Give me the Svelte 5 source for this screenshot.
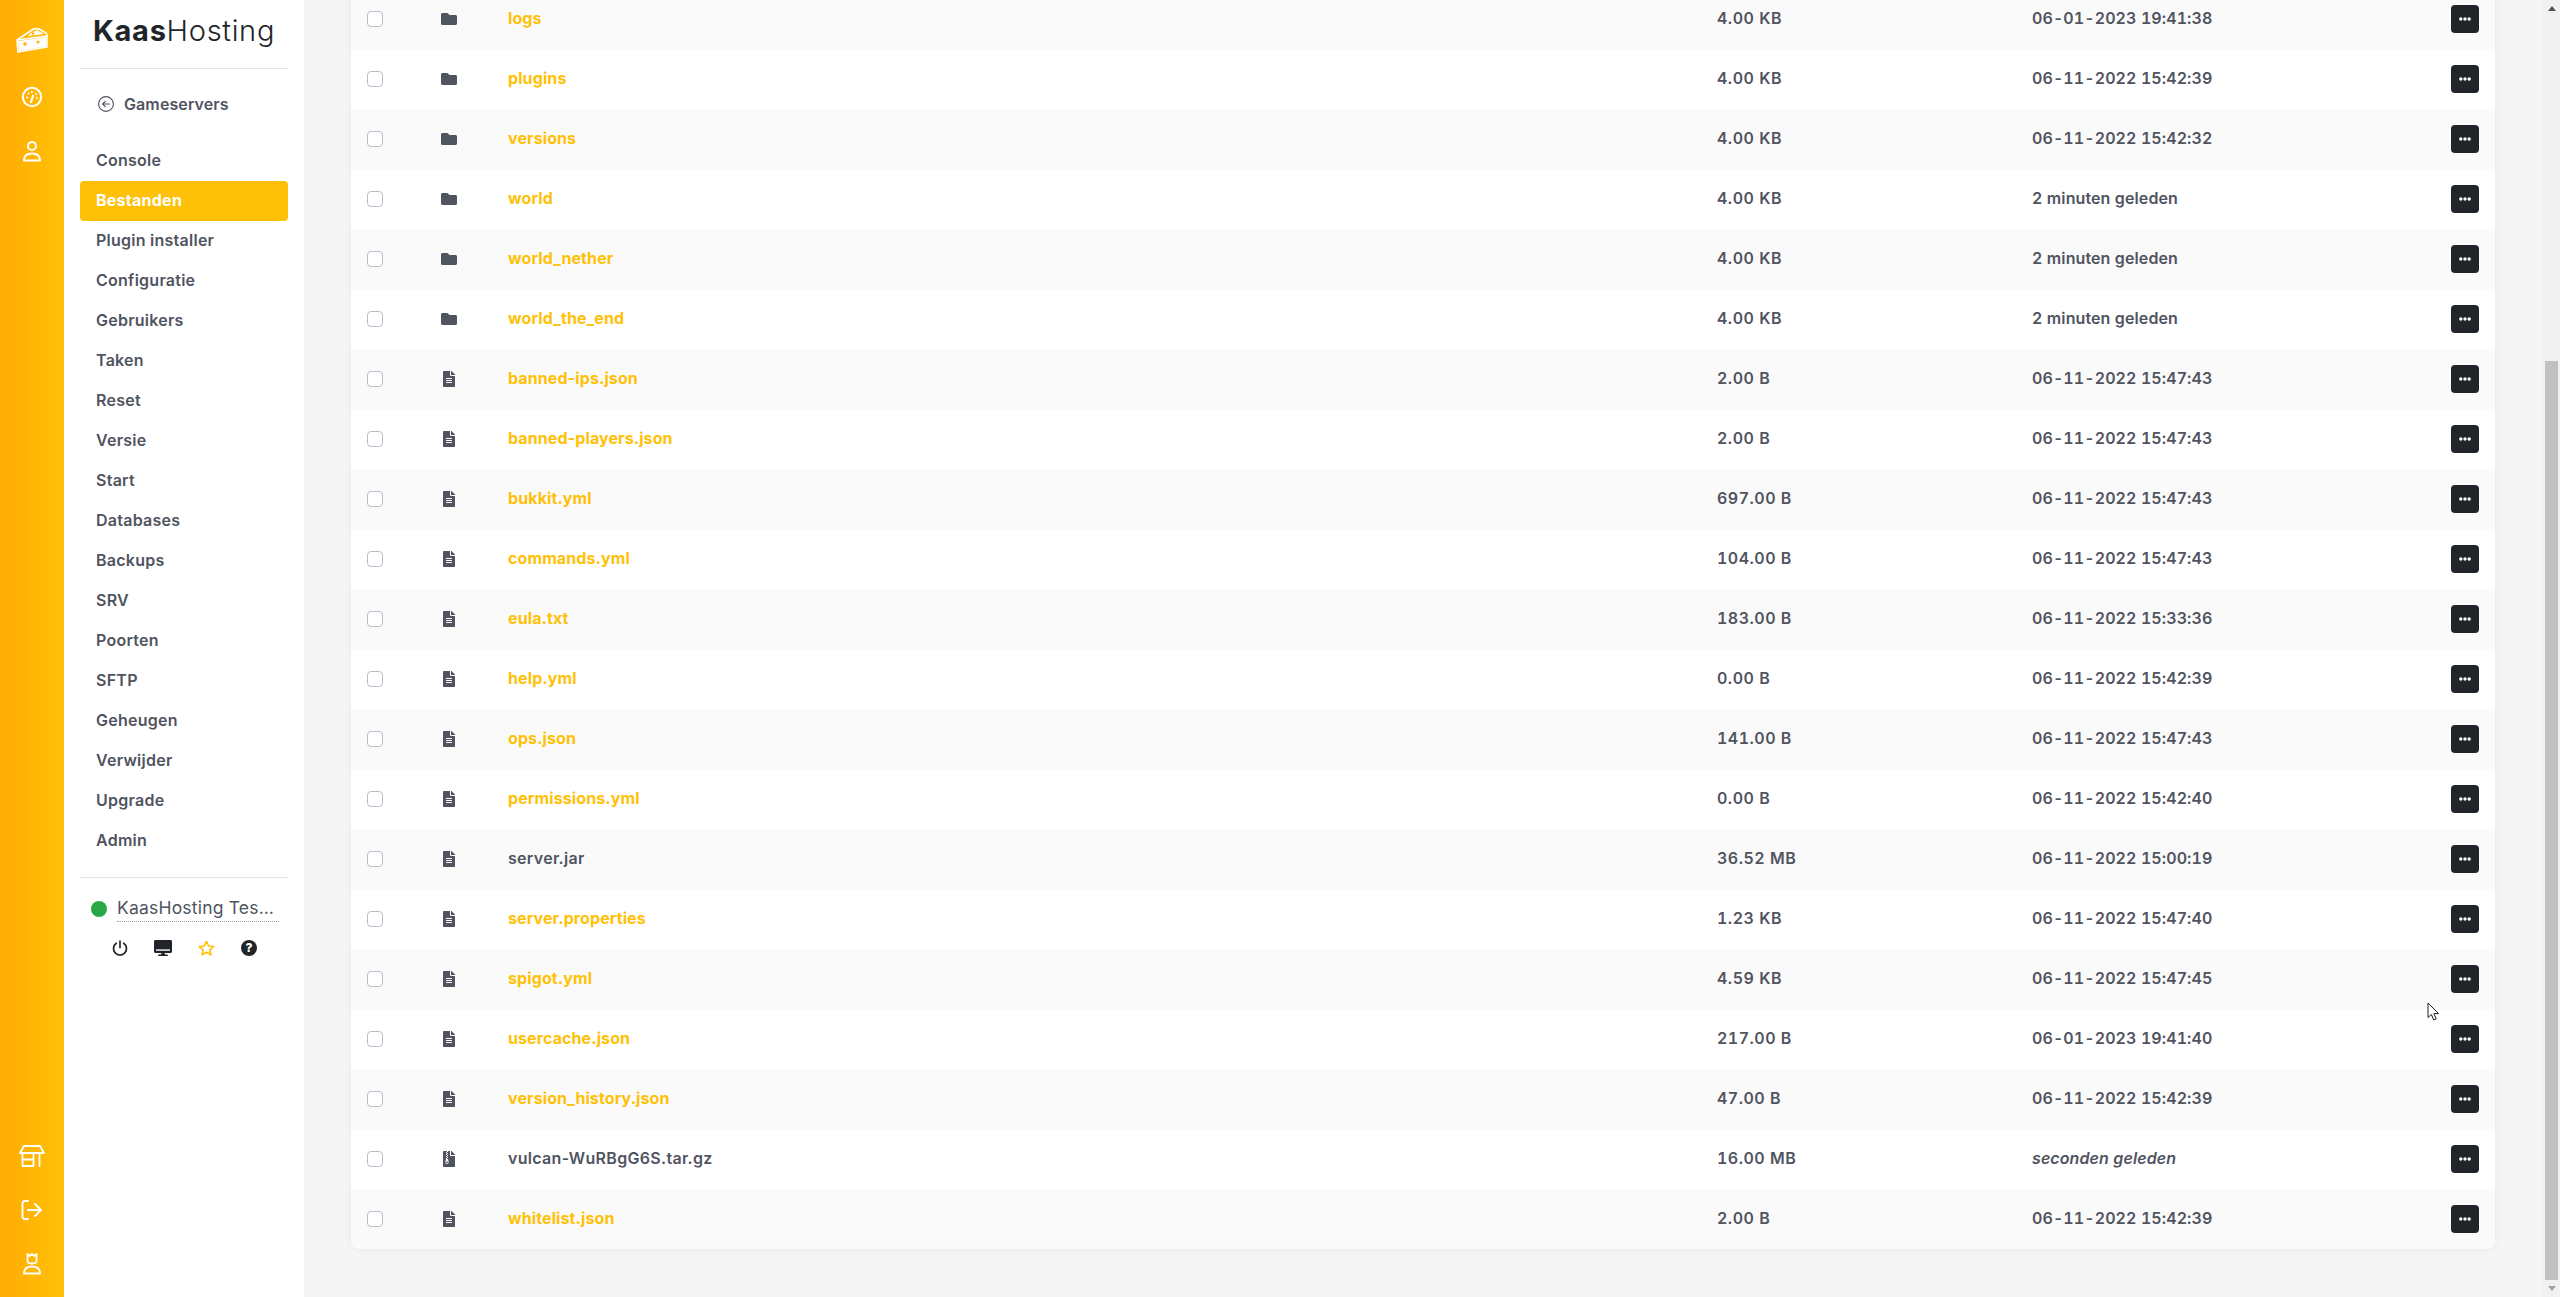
<script>
  const menu = ['Console', 'Bestanden', 'Plugin installer', 'Configuratie', 'Gebruikers', 'Taken', 'Reset', 'Versie', 'Start', 'Databases', 'Backups', 'SRV', 'Poorten', 'SFTP', 'Geheugen', 'Verwijder', 'Upgrade', 'Admin'];

  // type: d = folder, f = file, z = archive; plain = not editable, so no link colour
  const files = [
    { name: 'logs', type: 'd', size: '4.00 KB', date: '06-01-2023 19:41:38' },
    { name: 'plugins', type: 'd', size: '4.00 KB', date: '06-11-2022 15:42:39' },
    { name: 'versions', type: 'd', size: '4.00 KB', date: '06-11-2022 15:42:32' },
    { name: 'world', type: 'd', size: '4.00 KB', date: '2 minuten geleden' },
    { name: 'world_nether', type: 'd', size: '4.00 KB', date: '2 minuten geleden' },
    { name: 'world_the_end', type: 'd', size: '4.00 KB', date: '2 minuten geleden' },
    { name: 'banned-ips.json', type: 'f', size: '2.00 B', date: '06-11-2022 15:47:43' },
    { name: 'banned-players.json', type: 'f', size: '2.00 B', date: '06-11-2022 15:47:43' },
    { name: 'bukkit.yml', type: 'f', size: '697.00 B', date: '06-11-2022 15:47:43' },
    { name: 'commands.yml', type: 'f', size: '104.00 B', date: '06-11-2022 15:47:43' },
    { name: 'eula.txt', type: 'f', size: '183.00 B', date: '06-11-2022 15:33:36' },
    { name: 'help.yml', type: 'f', size: '0.00 B', date: '06-11-2022 15:42:39' },
    { name: 'ops.json', type: 'f', size: '141.00 B', date: '06-11-2022 15:47:43' },
    { name: 'permissions.yml', type: 'f', size: '0.00 B', date: '06-11-2022 15:42:40' },
    { name: 'server.jar', type: 'f', plain: true, size: '36.52 MB', date: '06-11-2022 15:00:19' },
    { name: 'server.properties', type: 'f', size: '1.23 KB', date: '06-11-2022 15:47:40' },
    { name: 'spigot.yml', type: 'f', size: '4.59 KB', date: '06-11-2022 15:47:45' },
    { name: 'usercache.json', type: 'f', size: '217.00 B', date: '06-01-2023 19:41:40' },
    { name: 'version_history.json', type: 'f', size: '47.00 B', date: '06-11-2022 15:42:39' },
    { name: 'vulcan-WuRBgG6S.tar.gz', type: 'z', plain: true, size: '16.00 MB', date: 'seconden geleden', recent: true },
    { name: 'whitelist.json', type: 'f', size: '2.00 B', date: '06-11-2022 15:42:39' }
  ];
</script>

<div class="app">
  <nav class="rail">
    <div class="rail-group">
      <svg class="cheese" width="32" height="26" viewBox="0 0 32 26" fill="none" stroke="#fff" stroke-width="1.6" stroke-linejoin="round">
        <path d="M1 13 L16 3 Q19 1 23 2 L30 6 Q31 7 31 9 L31 20 L2 25 Z" />
        <path d="M1 13 L31 9" />
        <path d="M2 14 L30 10 L30 19.5 L3 24 Z" fill="#fff" stroke="none" />
        <path d="M15 6 L21 3 L28 7 L12 9 Z" fill="#fff" stroke="none" />
        <circle cx="9" cy="17" r="1.8" fill="#ffb405" stroke="none" />
        <circle cx="22" cy="15" r="1.5" fill="#ffb405" stroke="none" />
        <circle cx="17" cy="6.5" r="1.3" fill="#ffb405" stroke="none" />
      </svg>
      <svg width="24" height="24" viewBox="0 0 24 24" fill="none" stroke="#fff" stroke-width="2" stroke-linecap="round">
        <circle cx="12" cy="12" r="9.2" />
        <path d="M11 17 L13 11" stroke-width="2.2" />
        <path d="M7 12.5h.01M8.5 8.5h.01M12 7h.01M16 9h.01M17 13h.01" />
      </svg>
      <svg width="24" height="24" viewBox="0 0 24 24" fill="none" stroke="#fff" stroke-width="2" stroke-linejoin="round">
        <circle cx="12" cy="7" r="4" />
        <path d="M4 21.5 Q4 14.5 12 14.5 Q20 14.5 20 21.5 Z" />
      </svg>
    </div>
    <div class="rail-group bottom">
      <svg width="26" height="22" viewBox="0 0 26 22" fill="none" stroke="#fff" stroke-width="1.8" stroke-linejoin="round" stroke-linecap="round">
        <path d="M5 1h16l4 7H1z" />
        <path d="M3.5 8v13h11V8M3.5 14.5h11M20.5 8v13" />
      </svg>
      <svg width="22" height="20" viewBox="0 0 22 20" fill="none" stroke="#fff" stroke-width="1.9" stroke-linecap="round" stroke-linejoin="round">
        <path d="M7 1H4Q1.500 1 1.500 3.500V16.500Q1.500 19 4 19H7" />
        <path d="M7 10H20M14 4l6 6-6 6" />
      </svg>
      <svg width="20" height="22" viewBox="0 0 20 22" fill="none" stroke="#fff" stroke-width="1.8" stroke-linejoin="round">
        <path d="M5.500 1l2.200 2L10 1l2.300 2 2.200-2v7Q14.500 10.500 10 10.500T5.500 8z" />
        <path d="M2 20.500Q2 13.500 10 13.500T18 20.500Z" />
      </svg>
    </div>
  </nav>

  <aside class="sidebar">
    <div class="logo"><b>Kaas</b>Hosting</div>
    <a class="back" href="#back">
      <svg width="16" height="16" viewBox="0 0 16 16" fill="none" stroke="#50545f" stroke-width="1.1" stroke-linecap="round" stroke-linejoin="round">
        <circle cx="8" cy="8" r="7.400" />
        <path d="M11.500 8H4.800M7.300 5.300L4.600 8l2.700 2.700" />
      </svg>
      Gameservers
    </a>
    <ul class="menu">
      {#each menu as item}
        <li class:active={item === 'Bestanden'}>{item}</li>
      {/each}
    </ul>
    <div class="server">
      <div class="server-name">
        <span class="dot"></span>
        <span class="name">KaasHosting Test Server</span>
      </div>
      <div class="server-actions">
        <svg width="16" height="16" viewBox="0 0 16 16" fill="none" stroke="#212529" stroke-width="1.700" stroke-linecap="round">
          <path d="M8 1v6.500" />
          <path d="M4.300 3.200a6.500 6.500 0 1 0 7.400 0" />
        </svg>
        <svg width="18" height="16" viewBox="0 0 576 512" fill="#212529">
          <path d="M528 0H48C21.500 0 0 21.500 0 48v320c0 26.500 21.500 48 48 48h192l-16 48h-72c-13.300 0-24 10.700-24 24s10.700 24 24 24h272c13.300 0 24-10.700 24-24s-10.700-24-24-24h-72l-16-48h192c26.500 0 48-21.500 48-48V48c0-26.500-21.500-48-48-48zm-16 340H64V60h448v280z" />
          <rect x="50" y="50" width="476" height="250" />
        </svg>
        <svg width="17" height="16" viewBox="0 0 24 23" fill="none" stroke="#ffc107" stroke-width="2.400" stroke-linejoin="round">
          <path d="M12 2l3 6.600 7.200.8-5.400 4.800 1.500 7.100L12 17.700l-6.300 3.600 1.500-7.100L1.800 9.400 9 8.600z" />
        </svg>
        <span class="help">?</span>
      </div>
    </div>
  </aside>

  <main class="main">
    <div class="card">
      {#each files as file}
        <div class="row">
          <span class="check"></span>
          <span class="type">
            {#if file.type === 'd'}
              <svg width="16" height="16" viewBox="0 0 512 512" fill="#50545f"><path d="M464 128H272l-64-64H48C21.490 64 0 85.490 0 112v288c0 26.510 21.490 48 48 48h416c26.510 0 48-21.490 48-48V176c0-26.510-21.490-48-48-48z" /></svg>
            {:else if file.type === 'z'}
              <svg width="16" height="16" viewBox="-64 0 512 512" fill="#50545f"><path d="M377 105L279.100 7c-4.500-4.500-10.600-7-17-7H256v128h128v-6.100c0-6.300-2.500-12.400-7-16.900zM128.400 336c-17.900 0-32.400 12.100-32.400 27 0 15 14.600 27 32.500 27s32.400-12.100 32.400-27-14.600-27-32.500-27zM224 136V0h-63.600v32h-32V0H24C10.700 0 0 10.700 0 24v464c0 13.300 10.700 24 24 24h336c13.300 0 24-10.700 24-24V160H248c-13.200 0-24-10.800-24-24zM95.900 32h32v32h-32zm32.300 384c-33.200 0-58-30.400-51.400-62.900L96.400 256v-32h32v-32h-32v-32h32v-32h-32V96h32V64h32v32h-32v32h32v32h-32v32h32v32h-32v32h22.100c5.700 0 10.700 4.100 11.800 9.700l17.300 87.700c6.400 32.400-18.400 62.600-51.400 62.600z" /></svg>
            {:else}
              <svg width="16" height="16" viewBox="-64 0 512 512" fill="#50545f"><path d="M224 136V0H24C10.700 0 0 10.700 0 24v464c0 13.300 10.700 24 24 24h336c13.300 0 24-10.700 24-24V160H248c-13.200 0-24-10.800-24-24zm64 236c0 6.600-5.400 12-12 12H108c-6.600 0-12-5.400-12-12v-8c0-6.600 5.400-12 12-12h168c6.600 0 12 5.400 12 12v8zm0-64c0 6.600-5.400 12-12 12H108c-6.600 0-12-5.400-12-12v-8c0-6.600 5.400-12 12-12h168c6.600 0 12 5.400 12 12v8zm0-72v8c0 6.600-5.400 12-12 12H108c-6.600 0-12-5.400-12-12v-8c0-6.600 5.400-12 12-12h168c6.600 0 12 5.400 12 12zm96-114.100v6.100H256V0h6.100c6.400 0 12.500 2.500 17 7l97.900 98c4.500 4.500 7 10.600 7 16.900z" /></svg>
            {/if}
          </span>
          <span class="file-name" class:plain={file.plain}>{file.name}</span>
          <span class="meta">{file.size}</span>
          <span class="meta date" class:recent={file.recent}>{file.date}</span>
          <button class="more" aria-label="Acties">
            <svg width="12" height="4" viewBox="0 0 12 4" fill="#fff"><circle cx="1.800" cy="2" r="1.700" /><circle cx="6" cy="2" r="1.700" /><circle cx="10.200" cy="2" r="1.700" /></svg>
          </button>
        </div>
      {/each}
    </div>
  </main>

  <div class="scrollbar">
    <span class="arrow up"></span>
    <div class="thumb-area"><div class="thumb"></div></div>
    <span class="arrow down"></span>
  </div>

  <svg class="cursor" width="14" height="20" viewBox="0 0 14 20" fill="#fff" stroke="#1c2024" stroke-width="1" stroke-linejoin="round">
    <path d="M1 1v14.500l3.400-3 2.300 5.500 2.500-1-2.300-5.400 4.600-.1z" />
  </svg>
</div>

<style>
  :global(body) {
    margin: 0;
    overflow: hidden;
  }

  .app {
    display: flex;
    position: relative;
    height: 1297px;
    overflow: hidden;
    background: #f5f5f5;
    font-family: Inter, "Noto Sans", sans-serif;
    color: #50545f;
  }

  .rail {
    flex: 0 0 64px;
    display: flex;
    flex-direction: column;
    justify-content: space-between;
    background: linear-gradient(90deg, #ffab03 0%, #ffc107 100%);
  }

  .rail-group {
    display: flex;
    flex-direction: column;
    align-items: center;
    gap: 30px;
    padding-top: 27px;
  }

  .rail-group .cheese {
    margin-bottom: 2px;
  }

  .rail-group.bottom {
    gap: 33px;
    padding: 0 0 22px;
  }

  .sidebar {
    flex: 0 0 208px;
    padding: 0 16px;
    background: #fff;
  }

  .logo {
    height: 69px;
    box-sizing: border-box;
    padding: 14px 0 0 13px;
    border-bottom: 1px solid #e3e4e6;
    font-size: 29px;
    font-weight: 300;
    line-height: 34px;
    letter-spacing: 0.7px;
    color: #212529;
  }

  .logo b {
    font-weight: 700;
  }

  .back {
    display: flex;
    align-items: center;
    gap: 10px;
    height: 20px;
    margin: 25px 0 0 18px;
    font-size: 16px;
    font-weight: 600;
    letter-spacing: 0.1px;
    color: #50545f;
    text-decoration: none;
  }

  .menu {
    list-style: none;
    margin: 27px 0 0;
    padding: 0;
  }

  .menu li {
    height: 40px;
    box-sizing: border-box;
    padding: 0 0 2px 16px;
    border-radius: 4px;
    font-size: 16px;
    font-weight: 600;
    letter-spacing: 0.25px;
    line-height: 38px;
  }

  .menu li.active {
    background: #ffc107;
    color: #fff;
    font-weight: 700;
  }

  .server {
    margin-top: 16px;
    padding-top: 18px;
    border-top: 1px solid #e3e4e6;
  }

  .server-name {
    display: flex;
    align-items: center;
    gap: 10px;
    padding-left: 11px;
  }

  .dot {
    flex: 0 0 16px;
    height: 16px;
    border-radius: 50%;
    background: #28a745;
  }

  .name {
    width: 162px;
    height: 26px;
    box-sizing: border-box;
    overflow: hidden;
    white-space: nowrap;
    text-overflow: ellipsis;
    border-bottom: 1px dotted #9a9a9a;
    font-size: 17.5px;
    font-weight: 400;
    letter-spacing: 0.2px;
    line-height: 24px;
  }

  .server-actions {
    display: flex;
    align-items: center;
    gap: 26px;
    margin: 18px 0 0 32px;
  }

  .help {
    width: 16px;
    height: 16px;
    border-radius: 50%;
    background: #212529;
    color: #fff;
    font-size: 12px;
    font-weight: 800;
    line-height: 16px;
    text-align: center;
  }

  .main {
    flex: 1;
    min-width: 0;
    padding: 0 48px 0 47px;
  }

  .card {
    margin-top: -11px;
    overflow: hidden;
    border-radius: 8px;
    background: #fff;
    box-shadow: 0 0 8px rgba(0, 0, 0, 0.06);
  }

  .row {
    display: grid;
    grid-template-columns: 74px 67px 1209px 315px 1fr 28px;
    align-items: center;
    height: 60px;
    padding: 0 16px;
    background: #fff;
  }

  .row:nth-child(odd) {
    background: #fafafa;
  }

  .check {
    width: 16px;
    height: 16px;
    box-sizing: border-box;
    border: 1px solid #b4bfca;
    border-radius: 4px;
    background: #fff;
  }

  .type {
    display: flex;
  }

  .file-name {
    padding-bottom: 2px;
    font-size: 16px;
    font-weight: 700;
    letter-spacing: 0.1px;
    color: #ffc107;
  }

  .file-name.plain {
    font-weight: 600;
    letter-spacing: 0.3px;
    color: #50545f;
  }

  .meta {
    padding-bottom: 2px;
    font-size: 16px;
    font-weight: 600;
    letter-spacing: 0.5px;
    font-variant-numeric: tabular-nums;
  }

  .date {
    letter-spacing: 0.1px;
  }

  .date.recent {
    font-style: italic;
  }

  .more {
    display: flex;
    align-items: center;
    justify-content: center;
    width: 28px;
    height: 28px;
    padding: 0;
    border: 0;
    border-radius: 4px;
    background: #212529;
  }

  .scrollbar {
    flex: 0 0 17px;
    display: flex;
    flex-direction: column;
    align-items: center;
    background: #f1f1f1;
  }

  .arrow {
    flex: 0 0 17px;
    width: 0;
    height: 0;
    box-sizing: border-box;
    border-left: 4px solid transparent;
    border-right: 4px solid transparent;
  }

  .arrow.up {
    margin-top: 6px;
    flex: 0 0 5px;
    border-bottom: 5px solid #505050;
  }

  .arrow.down {
    flex: 0 0 5px;
    margin-bottom: 6px;
    border-top: 5px solid #a3a3a3;
  }

  .thumb-area {
    flex: 1;
    width: 100%;
    display: flex;
    flex-direction: column;
    justify-content: flex-end;
    padding-bottom: 6px;
    box-sizing: border-box;
    align-items: center;
  }

  .thumb {
    width: 13px;
    height: 919px;
    background: #c1c1c1;
  }

  .cursor {
    position: absolute;
    left: 2427px;
    top: 1002px;
  }
</style>
